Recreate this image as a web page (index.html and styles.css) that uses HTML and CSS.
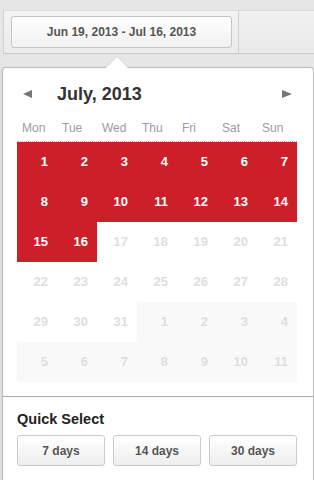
FILE: index.html
```html
<!DOCTYPE html>
<html lang="en">
<head>
  <meta charset="UTF-8" />
  <meta name="viewport" content="width=device-width, initial-scale=1.0" />
  <title>Date Range Picker</title>
  <link rel="stylesheet" href="styles.css">
</head>
<body>
  <div class="toolbar">
    <div class="toolbar-left">
      <button class="range-btn">Jun 19, 2013 - Jul 16, 2013</button>
    </div>
    <div class="toolbar-right"></div>
  </div>

  <div class="popup">
    <div class="caret"></div>

    <div class="month-head">
      <span class="nav nav-prev"></span>
      <span class="month-title">July, 2013</span>
      <span class="nav nav-next"></span>
    </div>

    <div class="weekdays">
      <span>Mon</span><span>Tue</span><span>Wed</span><span>Thu</span><span>Fri</span><span>Sat</span><span>Sun</span>
    </div>

    <div class="days">
      <span class="day sel">1</span><span class="day sel">2</span><span class="day sel">3</span><span class="day sel">4</span><span class="day sel">5</span><span class="day sel">6</span><span class="day sel">7</span>
      <span class="day sel">8</span><span class="day sel">9</span><span class="day sel">10</span><span class="day sel">11</span><span class="day sel">12</span><span class="day sel">13</span><span class="day sel">14</span>
      <span class="day sel">15</span><span class="day sel">16</span><span class="day off">17</span><span class="day off">18</span><span class="day off">19</span><span class="day off">20</span><span class="day off">21</span>
      <span class="day off">22</span><span class="day off">23</span><span class="day off">24</span><span class="day off">25</span><span class="day off">26</span><span class="day off">27</span><span class="day off">28</span>
      <span class="day off">29</span><span class="day off">30</span><span class="day off">31</span><span class="day next">1</span><span class="day next">2</span><span class="day next">3</span><span class="day next">4</span>
      <span class="day next">5</span><span class="day next">6</span><span class="day next">7</span><span class="day next">8</span><span class="day next">9</span><span class="day next">10</span><span class="day next">11</span>
    </div>

    <div class="quick">
      <h3>Quick Select</h3>
      <div class="quick-btns">
        <button class="qbtn">7 days</button>
        <button class="qbtn">14 days</button>
        <button class="qbtn">30 days</button>
      </div>
    </div>
  </div>
</body>
</html>
```

FILE: styles.css
```css
body {
  margin: 0;
  padding: 0;
  background: #e6e6e6;
  font-family: "Liberation Sans", Arial, sans-serif;
  height: 480px;
  overflow: hidden;
}
.toolbar {
  display: flex;
  margin: 10px 0 0 3px;
  height: 42px;
  border-top: 1px solid #dcdcdc;
  border-bottom: 1px solid #c9c9c9;
  border-left: 1px solid #d0d0d0;
  background: linear-gradient(#f3f3f3, #ebebeb);
}
.toolbar-left {
  width: 235px;
  padding: 5px 0 0 7px;
  box-sizing: border-box;
  border-right: 1px solid #d2d2d2;
}
.toolbar-right {
  flex: 1;
  background: linear-gradient(#f1f1f1, #e9e9e9);
}
.range-btn {
  width: 221px;
  height: 32px;
  border: 1px solid #c6c6c6;
  border-radius: 3px;
  background: linear-gradient(#ffffff, #f1f1f1);
  font-family: inherit;
  font-size: 12px;
  font-weight: bold;
  color: #555;
  padding: 0;
}
.popup {
  position: relative;
  margin: 13px 0 0 2px;
  width: 312px;
  box-sizing: border-box;
  height: 420px;
  background: #fff;
  border: 1px solid #bdbdbd;
  border-bottom: none;
  border-radius: 4px 4px 0 0;
  padding: 0 16px 0 14px;
  box-shadow: -1px 0 2px rgba(0,0,0,0.08);
}
.caret {
  position: absolute;
  top: -11px;
  left: 103px;
  width: 0;
  height: 0;
  border-left: 11px solid transparent;
  border-right: 11px solid transparent;
  border-bottom: 11px solid #fff;
}
.caret::before {
  content: "";
  position: absolute;
  left: -12px;
  top: -1px;
  border-left: 12px solid transparent;
  border-right: 12px solid transparent;
  border-bottom: 12px solid #d8d8d8;
  z-index: -1;
}
.month-head {
  display: flex;
  align-items: center;
  height: 20px;
  padding-top: 16px;
}
.month-title {
  flex: 1;
  margin-left: 25px;
  font-size: 18px;
  font-weight: bold;
  color: #333;
}
.nav {
  width: 0;
  height: 0;
  border-top: 4px solid transparent;
  border-bottom: 4px solid transparent;
}
.nav-prev {
  margin-left: 6px;
  border-right: 9px solid #777;
}
.nav-next {
  margin-right: 5px;
  border-left: 10px solid #777;
}
.weekdays {
  display: grid;
  grid-template-columns: repeat(7, 40px);
  padding: 14px 0 3px;
  line-height: 20px;
  font-size: 12px;
  color: #9a9ca4;
  border-bottom: 1px dotted #b8b8b8;
}
.weekdays span {
  padding-left: 5px;
}
.days {
  display: grid;
  grid-template-columns: repeat(7, 40px);
  grid-auto-rows: 40px;
}
.day {
  text-align: right;
  padding-right: 9px;
  line-height: 40px;
  font-size: 13px;
  font-weight: bold;
  color: #dedede;
}
.day.sel {
  background: #cc1f2a;
  color: #fff;
}
.day.next {
  background: #f9f9f9;
}
.quick {
  margin: 14px -16px 0 -14px;
  border-top: 1px solid #a9a9a9;
  padding: 14px 16px 0 14px;
}
.quick h3 {
  margin: 0 0 7px;
  font-size: 14.5px;
  line-height: 17px;
  color: #222;
}
.quick-btns {
  display: grid;
  grid-template-columns: repeat(3, 88px);
  gap: 8px;
}
.qbtn {
  height: 31px;
  border: 1px solid #cbcbcb;
  border-radius: 3px;
  background: linear-gradient(#ffffff, #eeeeee);
  font-family: inherit;
  font-size: 12px;
  font-weight: bold;
  color: #555;
  padding: 0;
}
```
